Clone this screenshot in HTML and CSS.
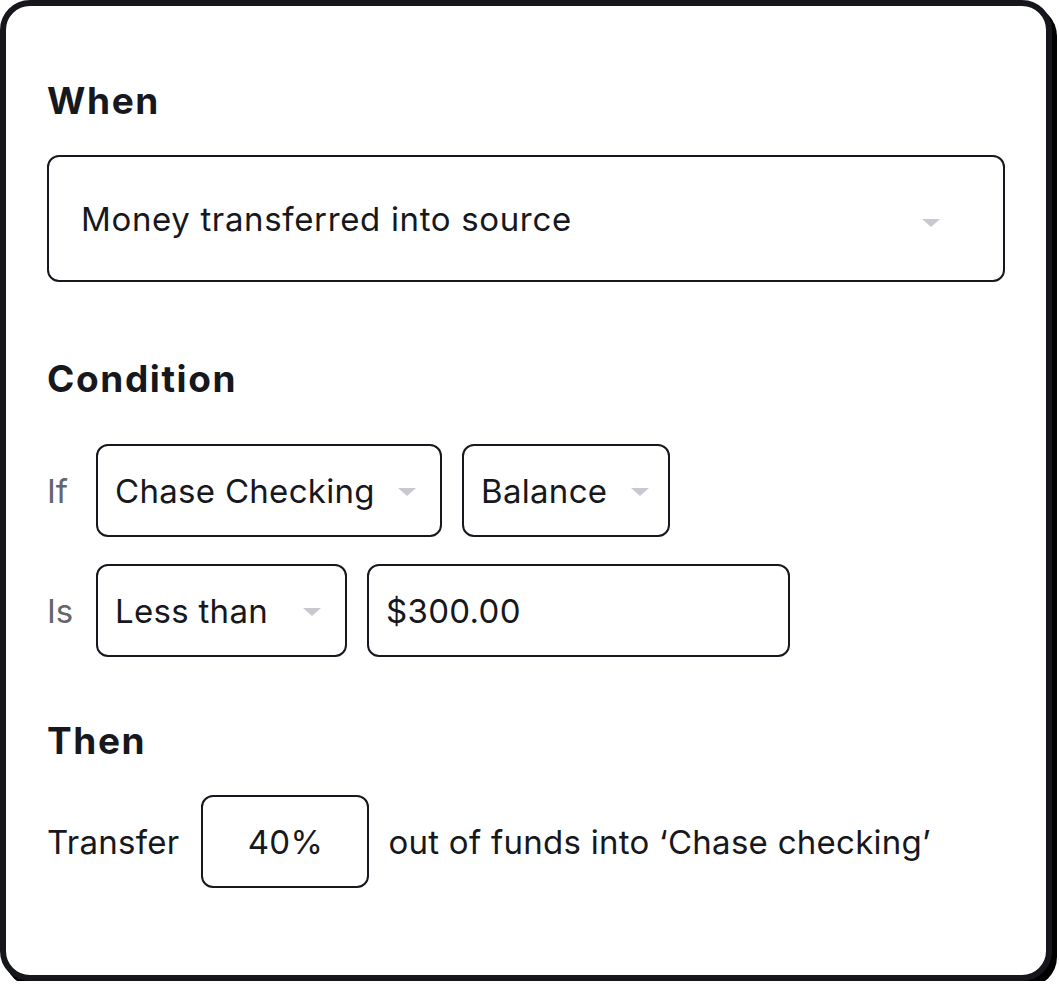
FILE: index.html
```html
<!DOCTYPE html>
<html lang="en">
<head>
  <meta charset="UTF-8">
  <meta name="viewport" content="width=device-width, initial-scale=1.0">
  <title>Automation Rule</title>
  <link rel="stylesheet" href="styles.css">
</head>
<body>
  <div class="card">
    <h2 class="section-title">When</h2>
    <div class="field field-wide">
      <span>Money transferred into source</span>
      <span class="caret caret-wide"></span>
    </div>

    <h2 class="section-title condition-title">Condition</h2>
    <div class="row">
      <span class="label">If</span>
      <div class="field field-account">
        <span>Chase Checking</span>
        <span class="caret"></span>
      </div>
      <div class="field field-metric">
        <span>Balance</span>
        <span class="caret"></span>
      </div>
    </div>
    <div class="row">
      <span class="label">Is</span>
      <div class="field field-compare">
        <span>Less than</span>
        <span class="caret"></span>
      </div>
      <div class="field field-input">
        <span>$300.00</span>
      </div>
    </div>

    <h2 class="section-title then-title">Then</h2>
    <div class="row transfer-row">
      <span class="text transfer-label">Transfer</span>
      <div class="field field-percent">
        <span>40%</span>
      </div>
      <span class="text">out of funds into ‘Chase checking’</span>
    </div>
  </div>
</body>
</html>
```

FILE: styles.css
```css
* {
  box-sizing: border-box;
}

body {
  margin: 0;
  background-color: #fff;
  font-family: Inter, "Noto Sans", sans-serif;
  color: #16181d;
}

.card {
  width: 1052px;
  height: 981px;
  background-color: #fff;
  border: 6px solid #15171c;
  border-radius: 30px;
  box-shadow: 5px 6px 0 #000;
  padding: 73px 41px 0 41px;
}

.section-title {
  margin: 0 0 32px 0;
  font-size: 37px;
  line-height: 44px;
  font-weight: 700;
  letter-spacing: 1.6px;
  color: #16181d;
}

.condition-title {
  margin-top: 75px;
  margin-bottom: 43px;
}

.then-title {
  margin-top: 62px;
}

.field {
  display: flex;
  align-items: center;
  height: 93px;
  padding: 0 24px 0 17px;
  border: 2px solid #16181d;
  border-radius: 12px;
  font-size: 33px;
  line-height: 40px;
  letter-spacing: 0.3px;
}

.field .caret {
  margin-left: auto;
}

.field-wide {
  height: 127px;
  padding-left: 32px;
  padding-right: 63px;
  letter-spacing: 0.65px;
}

.field-account {
  width: 346px;
}

.field-metric {
  width: 208px;
  padding-right: 19px;
}

.field-compare {
  width: 251px;
}

.field-input {
  width: 423px;
}

.field-percent {
  width: 168px;
  justify-content: center;
  padding: 0;
}

.caret {
  width: 0;
  height: 0;
  border-left: 9px solid transparent;
  border-right: 9px solid transparent;
  border-top: 8px solid #c8c9d0;
  margin-top: 2px;
}

.caret-wide {
  margin-top: 8px;
}

.row {
  display: flex;
  align-items: center;
  gap: 20px;
  margin-bottom: 27px;
}

.label {
  width: 29px;
  font-size: 33px;
  color: #64666c;
}

.transfer-row {
  gap: 19px;
}

.transfer-label {
  margin-right: 3px;
}

.text {
  font-size: 33px;
  letter-spacing: 0.27px;
  color: #16181d;
}
```
